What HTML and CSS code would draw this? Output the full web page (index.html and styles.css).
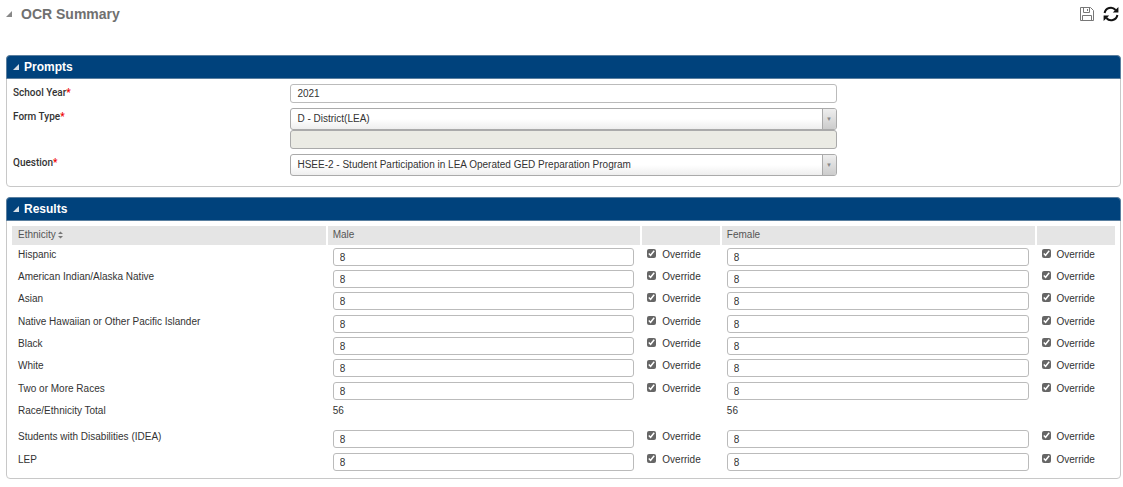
FILE: index.html
```html
<!DOCTYPE html>
<html lang="en">
<head>
    <meta charset="UTF-8">
    <meta name="viewport" content="width=device-width, initial-scale=1.0">
    <title>OCR Summary</title>
    <link rel="stylesheet" href="styles.css">
</head>
<body>
    <header class="page-header">
        <svg class="fold" viewBox="0 0 6 6"><path d="M6 0v6H0z"/></svg>
        <h1>OCR Summary</h1>
        <div class="actions">
            <button type="button" aria-label="Save">
                <svg width="16" height="16" viewBox="0 0 16 16" fill="none" stroke="#777">
                    <path d="M1.5 1.5h10l3 3v10h-13z"/>
                    <path d="M4.5 1.5v5h6v-5M8.5 3v2M3.5 14.5v-5h9v5"/>
                </svg>
            </button>
            <button type="button" aria-label="Refresh">
                <svg width="16" height="16" viewBox="0 0 16 16" fill="none" stroke="#111" stroke-width="2">
                    <path d="M1.6 7a6.3 6.3 0 0 1 11-3"/>
                    <path d="M14.4 9a6.3 6.3 0 0 1-11 3"/>
                    <path d="M15.4 1v5.6H9.8zM.6 15V9.4h5.6z" fill="#111" stroke="none"/>
                </svg>
            </button>
        </div>
    </header>

    <section class="panel">
        <h2><svg class="fold" viewBox="0 0 6 6"><path d="M6 0v6H0z"/></svg>Prompts</h2>
        <form class="prompts">
            <label for="schoolYear">School Year<span class="required">*</span></label>
            <input type="text" id="schoolYear" name="schoolYear" value="2021">

            <label for="formType">Form Type<span class="required">*</span></label>
            <div class="field">
                <div class="select">
                    <select id="formType" name="formType">
                        <option>D - District(LEA)</option>
                    </select>
                </div>
                <input type="text" aria-label="School" disabled>
            </div>

            <label for="question">Question<span class="required">*</span></label>
            <div class="select">
                <select id="question" name="question">
                    <option>HSEE-2 - Student Participation in LEA Operated GED Preparation Program</option>
                </select>
            </div>
        </form>
    </section>

    <section class="panel">
        <h2><svg class="fold" viewBox="0 0 6 6"><path d="M6 0v6H0z"/></svg>Results</h2>
        <div class="results">
            <table>
                <colgroup>
                    <col class="wide"><col class="wide"><col class="narrow"><col class="wide"><col class="narrow">
                </colgroup>
                <thead>
                    <tr>
                        <th>Ethnicity<svg class="sort" width="7" height="8" viewBox="0 0 7 8"><path d="M1 3l2.5-2.5L6 3zM1 5l2.5 2.5L6 5z"/></svg></th>
                        <th>Male</th>
                        <th></th>
                        <th>Female</th>
                        <th></th>
                    </tr>
                </thead>
                <tbody>
                    <tr>
                        <td>Hispanic</td>
                        <td class="entry"><input type="text" value="8" aria-label="Hispanic male"></td>
                        <td><label class="override"><input type="checkbox" checked>Override</label></td>
                        <td class="entry"><input type="text" value="8" aria-label="Hispanic female"></td>
                        <td><label class="override"><input type="checkbox" checked>Override</label></td>
                    </tr>
                    <tr>
                        <td>American Indian/Alaska Native</td>
                        <td class="entry"><input type="text" value="8" aria-label="American Indian/Alaska Native male"></td>
                        <td><label class="override"><input type="checkbox" checked>Override</label></td>
                        <td class="entry"><input type="text" value="8" aria-label="American Indian/Alaska Native female"></td>
                        <td><label class="override"><input type="checkbox" checked>Override</label></td>
                    </tr>
                    <tr>
                        <td>Asian</td>
                        <td class="entry"><input type="text" value="8" aria-label="Asian male"></td>
                        <td><label class="override"><input type="checkbox" checked>Override</label></td>
                        <td class="entry"><input type="text" value="8" aria-label="Asian female"></td>
                        <td><label class="override"><input type="checkbox" checked>Override</label></td>
                    </tr>
                    <tr>
                        <td>Native Hawaiian or Other Pacific Islander</td>
                        <td class="entry"><input type="text" value="8" aria-label="Native Hawaiian or Other Pacific Islander male"></td>
                        <td><label class="override"><input type="checkbox" checked>Override</label></td>
                        <td class="entry"><input type="text" value="8" aria-label="Native Hawaiian or Other Pacific Islander female"></td>
                        <td><label class="override"><input type="checkbox" checked>Override</label></td>
                    </tr>
                    <tr>
                        <td>Black</td>
                        <td class="entry"><input type="text" value="8" aria-label="Black male"></td>
                        <td><label class="override"><input type="checkbox" checked>Override</label></td>
                        <td class="entry"><input type="text" value="8" aria-label="Black female"></td>
                        <td><label class="override"><input type="checkbox" checked>Override</label></td>
                    </tr>
                    <tr>
                        <td>White</td>
                        <td class="entry"><input type="text" value="8" aria-label="White male"></td>
                        <td><label class="override"><input type="checkbox" checked>Override</label></td>
                        <td class="entry"><input type="text" value="8" aria-label="White female"></td>
                        <td><label class="override"><input type="checkbox" checked>Override</label></td>
                    </tr>
                    <tr>
                        <td>Two or More Races</td>
                        <td class="entry"><input type="text" value="8" aria-label="Two or More Races male"></td>
                        <td><label class="override"><input type="checkbox" checked>Override</label></td>
                        <td class="entry"><input type="text" value="8" aria-label="Two or More Races female"></td>
                        <td><label class="override"><input type="checkbox" checked>Override</label></td>
                    </tr>
                    <tr class="total">
                        <td>Race/Ethnicity Total</td>
                        <td>56</td>
                        <td></td>
                        <td>56</td>
                        <td></td>
                    </tr>
                    <tr>
                        <td>Students with Disabilities (IDEA)</td>
                        <td class="entry"><input type="text" value="8" aria-label="Students with Disabilities male"></td>
                        <td><label class="override"><input type="checkbox" checked>Override</label></td>
                        <td class="entry"><input type="text" value="8" aria-label="Students with Disabilities female"></td>
                        <td><label class="override"><input type="checkbox" checked>Override</label></td>
                    </tr>
                    <tr>
                        <td>LEP</td>
                        <td class="entry"><input type="text" value="8" aria-label="LEP male"></td>
                        <td><label class="override"><input type="checkbox" checked>Override</label></td>
                        <td class="entry"><input type="text" value="8" aria-label="LEP female"></td>
                        <td><label class="override"><input type="checkbox" checked>Override</label></td>
                    </tr>
                </tbody>
            </table>
        </div>
    </section>
</body>
</html>
```

FILE: styles.css
```css
* {
    margin: 0;
    padding: 0;
    box-sizing: border-box;
}

body, button, input, select {
    font-family: "Liberation Sans", Arial, sans-serif;
    font-size: 10px;
    color: #333;
}

body {
    background-color: #fff;
    padding: 4px 2px 8px 6px;
    line-height: 12px;
}

.page-header {
    display: flex;
    align-items: center;
    height: 20px;
    margin-bottom: 31px;
}

.fold {
    width: 6px;
    height: 6px;
    fill: #888;
}

h1 {
    margin-left: 9px;
    font-size: 14px;
    font-weight: 700;
    line-height: 20px;
    color: #707070;
}

.actions {
    display: flex;
    gap: 8px;
    margin-left: auto;
    padding-right: 2px;
}

.actions button {
    display: flex;
    border: none;
    background: none;
    cursor: pointer;
}

.panel {
    margin-bottom: 10px;
    border: 1px solid #c8c8c8;
    border-radius: 4px;
}

.panel h2 {
    display: flex;
    align-items: center;
    gap: 5px;
    height: 24px;
    margin: -1px -1px 0;
    padding-left: 6px;
    border: 1px solid #5b7f9f;
    border-radius: 4px 4px 0 0;
    background-color: #00427c;
    font-size: 12px;
    color: #fff;
}

.panel h2 .fold {
    fill: #d5dde5;
}

/* Prompts */
.prompts {
    display: grid;
    grid-template-columns: 25.2% 49.6%;
    row-gap: 5px;
    padding: 5px 6px 10px;
}

.prompts > label {
    padding-top: 3px;
    font-family: Roboto, "Liberation Sans", sans-serif;
    font-weight: 500;
}

.required {
    color: #e00;
}

input[type="text"] {
    display: block;
    width: 100%;
    height: 18px;
    padding: 0 6px;
    border: 1px solid #bbb;
    border-radius: 3px;
    background-color: #fff;
}

input[type="text"]:disabled {
    border-color: #aaa;
    background-color: #ebebe4;
}

.prompts > input[type="text"],
.prompts .field input[type="text"] {
    height: 19px;
}

.select {
    position: relative;
}

.select select {
    display: block;
    appearance: none;
    width: 100%;
    height: 22px;
    padding: 0 20px 2px 6px;
    border: 1px solid #aaa;
    border-radius: 3px;
    background: linear-gradient(#fff 50%, #eee);
}

.select::after {
    content: "▼";
    position: absolute;
    top: 1px;
    right: 1px;
    bottom: 1px;
    width: 13px;
    border-left: 1px solid #aaa;
    border-radius: 0 2px 2px 0;
    background: linear-gradient(#eee, #ccc);
    font-size: 6px;
    line-height: 20px;
    text-align: center;
    color: #888;
    pointer-events: none;
}

/* Results */
.results {
    padding: 5px 5px 6px;
}

table {
    width: 100%;
    table-layout: fixed;
    border-collapse: collapse;
}

.wide {
    width: 28.5%;
}

.narrow {
    width: 7.2%;
}

th {
    height: 19px;
    padding: 0 0 1px 5px;
    border-right: 2px solid #fff;
    background-color: #e5e5e5;
    font-weight: 400;
    text-align: left;
    color: #555;
}

th:first-child {
    padding-left: 6px;
}

th:last-child {
    border-right: none;
}

.sort {
    margin-left: 1px;
    vertical-align: middle;
    fill: #777;
}

td {
    height: 22px;
    padding: 4px 0 0 6px;
    vertical-align: top;
}

/* every third row takes the spare pixel */
tr:nth-child(3n) td {
    height: 23px;
}

.total td {
    height: 26px;
}

td.entry {
    padding-top: 3px;
    padding-right: 7px;
}

.override {
    display: flex;
    gap: 6px;
}

.override input {
    width: 9px;
    height: 9px;
    accent-color: #666;
}
```
